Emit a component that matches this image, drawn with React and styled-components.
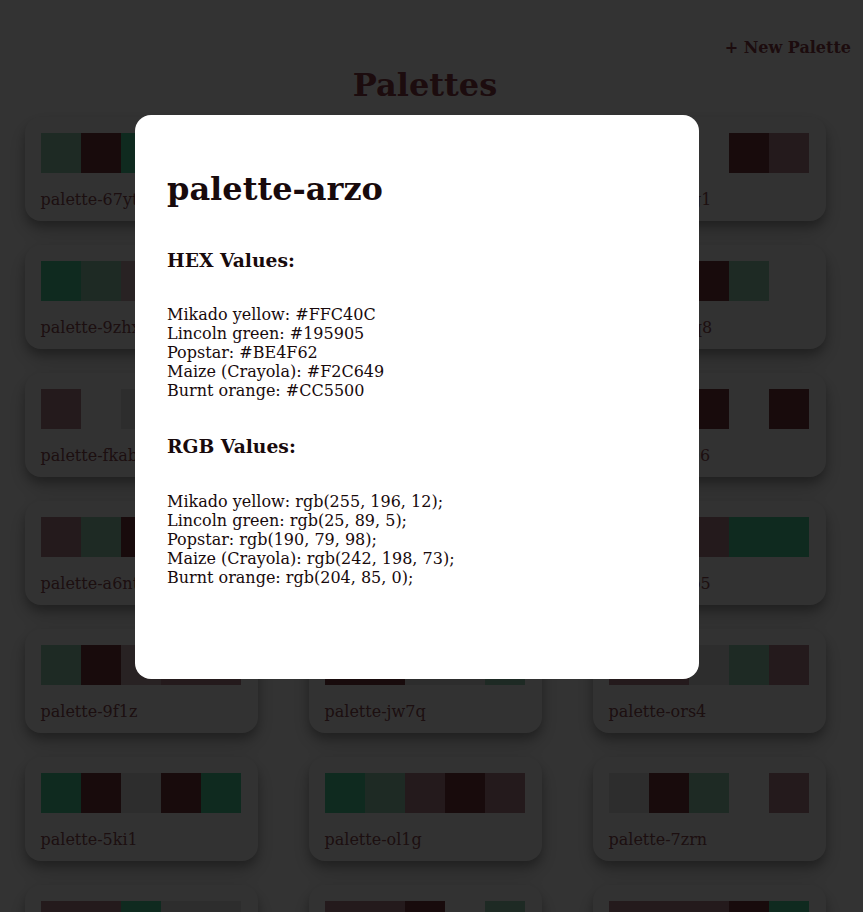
import React from "react";
import styled, { createGlobalStyle } from "styled-components";

const GlobalStyle = createGlobalStyle`
  body {
    margin: 0;
    background: #ffffff;
    font-family: "DejaVu Serif", "Liberation Serif", serif;
    color: #8c3c46;
  }
`;

const Page = styled.div`
  width: 850px;
  display: flex;
  flex-direction: column;
  align-items: center;
`;

const TopBar = styled.div`
  align-self: stretch;
  display: flex;
  justify-content: flex-end;
  padding-top: 38px;
`;

const NewButton = styled.button`
  font-family: "DejaVu Serif", serif;
  font-size: 16px;
  font-weight: bold;
  line-height: 19px;
  color: #8c3c46;
  background: none;
  border: 0;
  padding: 0 0 0 0;
  margin-right: -1px;
  cursor: pointer;
`;

const Title = styled.h1`
  font-size: 32px;
  line-height: 38px;
  margin: 9px 0 13px;
  color: #8c3c46;
`;

const Grid = styled.div`
  display: grid;
  grid-template-columns: repeat(3, 233px);
  column-gap: 51px;
  row-gap: 24px;
  padding-bottom: 40px;
`;

const Card = styled.div`
  background: #fafafa;
  border-radius: 16px;
  padding: 16px 16px 12px;
  box-shadow: 0 10px 22px rgba(0, 0, 0, 0.2), 0 6px 8px rgba(0, 0, 0, 0.22);
`;

const Swatches = styled.div`
  display: flex;
  width: 200px;
  height: 40px;
`;

const Swatch = styled.div`
  flex: 1;
  background: ${(p) => p.$color};
`;

const Label = styled.p`
  margin: 17px 0 0;
  font-size: 16px;
  line-height: 19px;
  color: #8c4a52;
`;

const Overlay = styled.div`
  position: fixed;
  inset: 0;
  background: rgba(0, 0, 0, 0.8);
`;

const Modal = styled.div`
  position: fixed;
  left: 135px;
  top: 115px;
  width: 564px;
  height: 564px;
  box-sizing: border-box;
  padding: 34px 32px 32px;
  background: #ffffff;
  border-radius: 16px;
  display: flex;
  flex-direction: column;
  color: #180a0c;
`;

const ModalTitle = styled.h1`
  font-size: 32px;
  line-height: 38px;
  margin: 21.44px 0;
`;

const SectionTitle = styled.h3`
  font-size: 18.72px;
  line-height: 22px;
  margin: 18.72px 0;
`;

const Values = styled.p`
  margin: 16px 0;
  font-size: 16px;
  line-height: 19px;
`;

const B = "#78373f";
const G = "#4bd29b";
const GR = "#e0e0e0";
const L = "#fafafa";
const BD = "#b4828c";
const GD = "#96d2b4";
const BG = "#c8aab0";

const palettes = [
  { name: "palette-67yt", colors: [GD, B, G, BD, GR] },
  { name: "palette-k3pq", colors: [G, BD, B, GR, GD] },
  { name: "palette-u2g1", colors: [GR, L, L, B, BD] },
  { name: "palette-9zhx", colors: [G, GD, BG, B, L] },
  { name: "palette-w0re", colors: [BD, G, GR, B, G] },
  { name: "palette-mfq8", colors: [GR, B, B, GD, L] },
  { name: "palette-fkab", colors: [BD, L, GR, G, B] },
  { name: "palette-3nzc", colors: [B, GR, GD, BD, G] },
  { name: "palette-xb06", colors: [G, GR, B, L, B] },
  { name: "palette-a6nt", colors: [BD, GD, B, G, GR] },
  { name: "palette-s7ld", colors: [GR, B, G, BD, GD] },
  { name: "palette-e1b5", colors: [GR, B, BD, G, G] },
  { name: "palette-9f1z", colors: [GD, B, BG, BD, BD] },
  { name: "palette-jw7q", colors: [B, B, GR, GR, GD] },
  { name: "palette-ors4", colors: [BD, BD, GR, GD, BD] },
  { name: "palette-5ki1", colors: [G, B, GR, B, G] },
  { name: "palette-ol1g", colors: [G, GD, BD, B, BD] },
  { name: "palette-7zrn", colors: [GR, B, GD, L, BD] },
  { name: "palette-h2ve", colors: [BD, BD, G, GR, GR] },
  { name: "palette-c8mu", colors: [BD, BD, B, L, GD] },
  { name: "palette-t4yi", colors: [BD, BD, BD, B, G] },
];

const hexValues = [
  "Mikado yellow: #FFC40C",
  "Lincoln green: #195905",
  "Popstar: #BE4F62",
  "Maize (Crayola): #F2C649",
  "Burnt orange: #CC5500",
];

const rgbValues = [
  "Mikado yellow: rgb(255, 196, 12);",
  "Lincoln green: rgb(25, 89, 5);",
  "Popstar: rgb(190, 79, 98);",
  "Maize (Crayola): rgb(242, 198, 73);",
  "Burnt orange: rgb(204, 85, 0);",
];

export default function App() {
  return (
    <>
      <GlobalStyle />
      <Page>
        <TopBar>
          <NewButton>+ New Palette</NewButton>
        </TopBar>
        <Title>Palettes</Title>
        <Grid>
          {palettes.map((p) => (
            <Card key={p.name}>
              <Swatches>
                {p.colors.map((c, i) => (
                  <Swatch key={i} $color={c} />
                ))}
              </Swatches>
              <Label>{p.name}</Label>
            </Card>
          ))}
        </Grid>
      </Page>
      <Overlay />
      <Modal>
        <ModalTitle>palette-arzo</ModalTitle>
        <SectionTitle>HEX Values:</SectionTitle>
        <Values>
          {hexValues.map((v) => (
            <div key={v}>{v}</div>
          ))}
        </Values>
        <SectionTitle>RGB Values:</SectionTitle>
        <Values>
          {rgbValues.map((v) => (
            <div key={v}>{v}</div>
          ))}
        </Values>
      </Modal>
    </>
  );
}
